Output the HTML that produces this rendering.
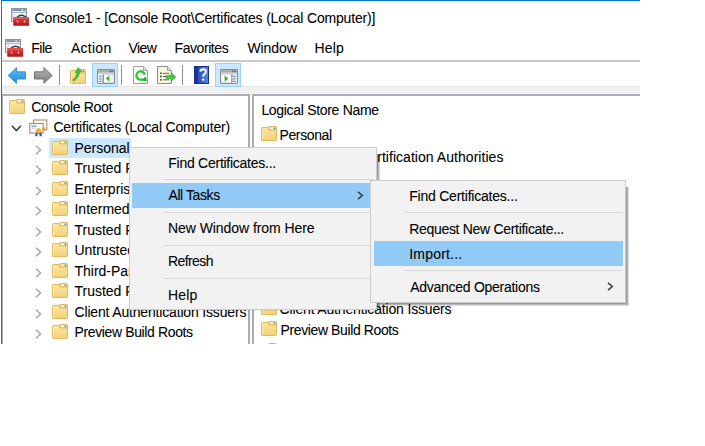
<!DOCTYPE html>
<html><head><meta charset="utf-8">
<style>
html,body{margin:0;padding:0;background:#fff;width:705px;height:446px;overflow:hidden}
body{position:relative;font-family:"Liberation Sans",sans-serif;color:#000}
.a{position:absolute}
.t{position:absolute;white-space:nowrap;font-size:14px;line-height:16px;letter-spacing:-0.24px;-webkit-text-stroke:0.08px #000}
svg.i{position:absolute;overflow:visible}
</style></head><body>
<svg width="0" height="0" style="position:absolute">
<defs>
<linearGradient id="fold" x1="0" y1="0" x2="0" y2="1"><stop offset="0" stop-color="#fce7a2"/><stop offset="1" stop-color="#f3d178"/></linearGradient>
<linearGradient id="blueA" x1="0" y1="0" x2="0" y2="1"><stop offset="0" stop-color="#62c4fa"/><stop offset="1" stop-color="#1c86dc"/></linearGradient>
<linearGradient id="greyA" x1="0" y1="0" x2="0" y2="1"><stop offset="0" stop-color="#b4b4b4"/><stop offset="1" stop-color="#7c7c7c"/></linearGradient>
<linearGradient id="helpB" x1="0" y1="0" x2="1" y2="0"><stop offset="0" stop-color="#1f3fa8"/><stop offset="0.3" stop-color="#2c52c0"/><stop offset="1" stop-color="#5a86e6"/></linearGradient>
<linearGradient id="redB" x1="0" y1="0" x2="0" y2="1"><stop offset="0" stop-color="#e84040"/><stop offset="1" stop-color="#b81414"/></linearGradient>
<symbol id="folder" viewBox="0 0 16 15">
<path d="M7.5,3.5 V1.2 Q7.5,0.5 8.2,0.5 H14.8 Q15.5,0.5 15.5,1.2 V5 Z" fill="#f3d37c" stroke="#deb862" stroke-width="1"/>
<rect x="9" y="1.5" width="4.5" height="1.8" fill="#fffbe8"/>
<circle cx="13.3" cy="2.3" r="0.9" fill="#3f8fd8"/>
<path d="M0.5,2.2 Q0.5,1.5 1.2,1.5 H6.3 Q7,1.5 7.4,2.4 L8,4 H15.5 V13.8 Q15.5,14.5 14.8,14.5 H1.2 Q0.5,14.5 0.5,13.8 Z" fill="url(#fold)" stroke="#deb862" stroke-width="1"/>
<path d="M1.5,3 V13.5" stroke="#fdebb0" stroke-width="1"/>
</symbol>
<symbol id="mmc" viewBox="0 0 18 18">
<rect x="0.5" y="0.5" width="15" height="13" fill="#f4f6f8" stroke="#8a93a6"/>
<rect x="1" y="1" width="14" height="2.2" fill="#c9cfdc"/>
<rect x="1.5" y="1.5" width="9" height="1.2" fill="#5d6b88"/>
<rect x="12" y="1.5" width="2.5" height="1.2" fill="#5d6b88"/>
<rect x="1" y="4" width="14" height="1" fill="#aab3c4"/>
<rect x="1" y="5.5" width="3" height="8" fill="#dfe4ec"/>
<path d="M6,9.3 Q10.5,5.2 15,9.3" fill="none" stroke="#3a3f44" stroke-width="1.4"/>
<rect x="2.2" y="9" width="16" height="8.7" rx="0.8" fill="url(#redB)"/>
<rect x="2.7" y="9.6" width="15" height="1.3" fill="#f06a6a" opacity="0.7"/>
<rect x="5.7" y="12.2" width="1.6" height="2.6" rx="0.8" fill="#9fc9c6"/>
<rect x="12.7" y="12.2" width="1.6" height="2.6" rx="0.8" fill="#9fc9c6"/>
</symbol>
<symbol id="chevR" viewBox="0 0 7 10"><path d="M1,0.8 L5.6,5 L1,9.2" fill="none" stroke="#a6a6a6" stroke-width="1.5"/></symbol>
</defs></svg>
<div class="a" style="left:1px;top:0px;width:639px;height:1px;background:#0078d7"></div>
<div class="a" style="left:1px;top:0px;width:1px;height:344px;background:#0078d7"></div>
<svg class="i" style="left:11px;top:8px" width="18" height="18"><use href="#mmc"/></svg>
<div class="t" style="left:34.6px;top:10px;letter-spacing:-0.173px">Console1 - [Console Root\Certificates (Local Computer)]</div>
<svg class="i" style="left:4.5px;top:38.7px" width="18" height="18"><use href="#mmc"/></svg>
<div class="t" style="left:31.3px;top:40px;letter-spacing:-0.5px">File</div>
<div class="t" style="left:70.9px;top:40px;letter-spacing:0.28px">Action</div>
<div class="t" style="left:128.5px;top:40px;letter-spacing:-0.6px">View</div>
<div class="t" style="left:174.6px;top:40px;letter-spacing:-0.44px">Favorites</div>
<div class="t" style="left:247.4px;top:40px;letter-spacing:-0.08px">Window</div>
<div class="t" style="left:314.5px;top:40px;letter-spacing:0.2px">Help</div>
<div class="a" style="left:2px;top:60px;width:638px;height:2px;background:#c8c9cb"></div>
<div class="a" style="left:2px;top:86px;width:638px;height:1px;background:#e6e6e6"></div>
<div class="a" style="left:2px;top:87px;width:638px;height:6px;background:#f0f0f0"></div>
<div class="a" style="left:2px;top:93px;width:638px;height:1px;background:#f8f8f8"></div>
<svg class="i" style="left:0;top:0" width="705" height="100"><path d="M8.2,75.5 L16.5,67.6 V71.8 H25.5 V79 H16.5 V83.3 Z" fill="url(#blueA)" stroke="#2f86d2" stroke-width="0.9" stroke-linejoin="round"/><path d="M52.2,75.5 L43.9,67.6 V71.8 H34.5 V79 H43.9 V83.3 Z" fill="url(#greyA)" stroke="#6a6a6a" stroke-width="0.9" stroke-linejoin="round"/></svg>
<div class="a" style="left:59px;top:65px;width:1.3px;height:20px;background:#8f8f8f"></div>
<div class="a" style="left:121px;top:65px;width:1.3px;height:20px;background:#8f8f8f"></div>
<div class="a" style="left:182px;top:65px;width:1.3px;height:20px;background:#8f8f8f"></div>
<svg class="i" style="left:70px;top:68.5px" width="16" height="15"><use href="#folder"/></svg>
<svg class="i" style="left:0;top:0" width="705" height="100"><path d="M72.5,80 Q76.5,77 77.2,72.5 L75,72.6 L78.2,67.6 L82,71.5 L79.6,72 Q79,78 73.5,81 Z" fill="#3fc43a" stroke="#2a9a28" stroke-width="0.6"/></svg>
<div class="a" style="left:92px;top:63px;width:26px;height:23.5px;background:#cce8ff;border:1px solid #99d1ff;box-sizing:border-box"></div>
<div class="a" style="left:215px;top:63px;width:26px;height:23.5px;background:#cce8ff;border:1px solid #99d1ff;box-sizing:border-box"></div>
<svg class="i" style="left:97px;top:69.2px" width="18" height="15" viewBox="0 0 18 15"><rect x="0.6" y="0.6" width="16.8" height="13.8" rx="0.8" fill="#fff" stroke="#868b94" stroke-width="1.2"/><rect x="1.2" y="1.2" width="15.6" height="2.6" fill="#a4a8ae"/><rect x="12" y="1.6" width="4.2" height="1.6" fill="#707680"/><rect x="1.2" y="3.8" width="15.6" height="1" fill="#e6e8ea"/><rect x="1.2" y="4.6" width="15.6" height="0.8" fill="#a9adb3"/><rect x="1.2" y="5.4" width="4.6" height="8.4" fill="#f4f6f8"/><rect x="5.6" y="5.4" width="1.4" height="8.4" fill="#8c9098"/><rect x="2.3" y="6.8" width="2.4" height="1.1" rx="0.5" fill="#4f7fc8"/><rect x="2.3" y="9.3" width="2.4" height="1.1" rx="0.5" fill="#4f7fc8"/><rect x="2.3" y="11.8" width="2.4" height="1.1" rx="0.5" fill="#4f7fc8"/><path d="M8.8,9.6 L12.4,6.2 V13 Z" fill="#3cb43c"/><rect x="14.6" y="5.6" width="0.7" height="8" fill="#d8d8d8"/></svg>
<svg class="i" style="left:220px;top:69.2px" width="18" height="15" viewBox="0 0 18 15"><rect x="0.6" y="0.6" width="16.8" height="13.8" rx="0.8" fill="#fff" stroke="#868b94" stroke-width="1.2"/><rect x="1.2" y="1.2" width="15.6" height="2.6" fill="#a4a8ae"/><rect x="12" y="1.6" width="4.2" height="1.6" fill="#707680"/><rect x="1.2" y="3.8" width="15.6" height="1" fill="#e6e8ea"/><rect x="1.2" y="4.6" width="15.6" height="0.8" fill="#a9adb3"/><rect x="12.2" y="5.4" width="4.6" height="8.4" fill="#f4f6f8"/><rect x="11.2" y="5.4" width="1.4" height="8.4" fill="#8c9098"/><rect x="13.3" y="6.8" width="2.4" height="1.1" rx="0.5" fill="#4f7fc8"/><rect x="13.3" y="9.3" width="2.4" height="1.1" rx="0.5" fill="#4f7fc8"/><rect x="13.3" y="11.8" width="2.4" height="1.1" rx="0.5" fill="#4f7fc8"/><path d="M4.6,6.2 L8.4,9.6 L4.6,13 Z" fill="#3cb43c"/></svg>
<svg class="i" style="left:133px;top:66px" width="16" height="18" viewBox="0 0 16 18"><path d="M0.5,0.5 H10.5 L14.5,4.5 V17.5 H0.5 Z" fill="#fdfdfd" stroke="#9c9c9c"/><path d="M10.5,0.5 V4.5 H14.5" fill="#dedede" stroke="#a8a8a8"/><path d="M11.74,8.77 A4.2,4.2 0 1 0 10.0,12.94" fill="none" stroke="#2fc52f" stroke-width="2.3"/><path d="M8.6,14.2 L12.9,10.6 L13.8,15.4 Z" fill="#16ad16"/></svg>
<svg class="i" style="left:157px;top:66px" width="20" height="18" viewBox="0 0 20 18"><path d="M0.5,0.5 H10.5 L14.5,4.5 V17.5 H0.5 Z" fill="#fbf5d8" stroke="#8e8e8e"/><path d="M10.5,0.5 V4.5 H14.5" fill="#e0e0e0" stroke="#9a9a9a"/><rect x="3" y="6.5" width="1.8" height="1.6" fill="#555"/><rect x="6" y="6.8" width="6" height="1" fill="#5560a8"/><rect x="3" y="9.7" width="1.8" height="1.6" fill="#555"/><rect x="6" y="10" width="6" height="1" fill="#5560a8"/><rect x="3" y="13" width="1.8" height="1.6" fill="#555"/><rect x="6" y="13.3" width="6" height="1" fill="#5560a8"/><path d="M9,9.6 H14 V6.6 L18.8,11 L14,15.4 V12.4 H9 Z" fill="#46c940" stroke="#2aa428" stroke-width="0.6"/></svg>
<svg class="i" style="left:193.5px;top:66px" width="15" height="18" viewBox="0 0 15 18"><rect x="0.5" y="0.5" width="14" height="17" fill="url(#helpB)" stroke="#15308a"/><rect x="1" y="1" width="3" height="16" fill="#1a3796"/><path d="M6.3,5.6 Q6.5,3.2 9.2,3.2 Q12,3.3 11.9,5.8 Q11.8,7.6 9.9,8.6 Q9.1,9.2 9.1,10.8" fill="none" stroke="#fff" stroke-width="1.9"/><circle cx="9.1" cy="13.6" r="1.2" fill="#fff"/></svg>
<div class="a" style="left:2px;top:94px;width:638px;height:2px;background:#a9adb3"></div>
<div class="a" style="left:2px;top:94px;width:1px;height:250px;background:#a9adb3"></div>
<div class="a" style="left:248px;top:94px;width:2px;height:250px;background:#a9adb3"></div>
<div class="a" style="left:250px;top:94px;width:2px;height:250px;background:#fafafa"></div>
<div class="a" style="left:252px;top:94px;width:2px;height:250px;background:#a9adb3"></div>
<svg class="i" style="left:9px;top:99px" width="16" height="15"><use href="#folder"/></svg>
<div class="t" style="left:31.3px;top:99px;letter-spacing:-0.349px">Console Root</div>
<svg class="i" style="left:11px;top:125px" width="11" height="7" viewBox="0 0 11 7"><path d="M0.8,0.8 L5.4,5.6 L10,0.8" fill="none" stroke="#404040" stroke-width="1.6"/></svg>
<svg class="i" style="left:29px;top:119px" width="19" height="18" viewBox="0 0 19 18"><rect x="4.5" y="1" width="13.3" height="10" fill="#fdfcf8" stroke="#a48e6c" stroke-width="1.1"/><rect x="0.8" y="4.5" width="13.3" height="9.6" fill="#fdfcf8" stroke="#a48e6c" stroke-width="1.1"/><rect x="2.6" y="6.6" width="5" height="1.2" fill="#7c8ad6"/><rect x="2.6" y="8.8" width="3.5" height="0.9" fill="#aab6e4"/><circle cx="14.6" cy="9.6" r="1.6" fill="#eaa520"/><path d="M6.9,13.2 L5.9,17.6 L7.4,16.9 L8.2,17.6 L9.2,13.6 Z" fill="#1d5fe6"/><path d="M9.8,13.6 L10.8,17.6 L11.6,16.9 L13.1,17.6 L12.2,13.2 Z" fill="#1d5fe6"/><circle cx="9.5" cy="12" r="2.4" fill="#f3b72a" stroke="#d38c12" stroke-width="0.6"/></svg>
<div class="t" style="left:53.4px;top:119px;letter-spacing:-0.19px">Certificates (Local Computer)</div>
<div class="a" style="left:49px;top:137.5px;width:82px;height:20.5px;background:#cce8ff"></div>
<div class="a" style="left:3px;top:96px;width:245px;height:248px;overflow:hidden">
<svg class="i" style="left:32px;top:48.5px" width="7" height="10"><use href="#chevR"/></svg>
<svg class="i" style="left:49px;top:44px" width="16" height="15"><use href="#folder"/></svg>
<div class="t" style="left:71.5px;top:44px;letter-spacing:-0.02px">Personal</div>
<svg class="i" style="left:32px;top:68.5px" width="7" height="10"><use href="#chevR"/></svg>
<svg class="i" style="left:49px;top:64px" width="16" height="15"><use href="#folder"/></svg>
<div class="t" style="left:71.5px;top:64px;letter-spacing:-0.02px">Trusted Root Certification Authorities</div>
<svg class="i" style="left:32px;top:89.5px" width="7" height="10"><use href="#chevR"/></svg>
<svg class="i" style="left:49px;top:85px" width="16" height="15"><use href="#folder"/></svg>
<div class="t" style="left:71.5px;top:85px;letter-spacing:-0.02px">Enterprise Trust</div>
<svg class="i" style="left:32px;top:109.5px" width="7" height="10"><use href="#chevR"/></svg>
<svg class="i" style="left:49px;top:105px" width="16" height="15"><use href="#folder"/></svg>
<div class="t" style="left:71.5px;top:105px;letter-spacing:-0.02px">Intermediate Certification Authorities</div>
<svg class="i" style="left:32px;top:130.5px" width="7" height="10"><use href="#chevR"/></svg>
<svg class="i" style="left:49px;top:126px" width="16" height="15"><use href="#folder"/></svg>
<div class="t" style="left:71.5px;top:126px;letter-spacing:-0.02px">Trusted Publishers</div>
<svg class="i" style="left:32px;top:150.5px" width="7" height="10"><use href="#chevR"/></svg>
<svg class="i" style="left:49px;top:146px" width="16" height="15"><use href="#folder"/></svg>
<div class="t" style="left:71.5px;top:146px;letter-spacing:-0.02px">Untrusted Certificates</div>
<svg class="i" style="left:32px;top:171.5px" width="7" height="10"><use href="#chevR"/></svg>
<svg class="i" style="left:49px;top:167px" width="16" height="15"><use href="#folder"/></svg>
<div class="t" style="left:71.5px;top:167px;letter-spacing:-0.02px">Third-Party Root Certification Authorities</div>
<svg class="i" style="left:32px;top:191.5px" width="7" height="10"><use href="#chevR"/></svg>
<svg class="i" style="left:49px;top:187px" width="16" height="15"><use href="#folder"/></svg>
<div class="t" style="left:71.5px;top:187px;letter-spacing:-0.02px">Trusted People</div>
<svg class="i" style="left:32px;top:212.5px" width="7" height="10"><use href="#chevR"/></svg>
<svg class="i" style="left:49px;top:208px" width="16" height="15"><use href="#folder"/></svg>
<div class="t" style="left:71.5px;top:208px;letter-spacing:-0.169px">Client Authentication Issuers</div>
<svg class="i" style="left:32px;top:232.5px" width="7" height="10"><use href="#chevR"/></svg>
<svg class="i" style="left:49px;top:228px" width="16" height="15"><use href="#folder"/></svg>
<div class="t" style="left:71.5px;top:228px;letter-spacing:-0.373px">Preview Build Roots</div>
</div>
<div class="a" style="left:254px;top:96px;width:386px;height:248px;overflow:hidden">
<div class="t" style="left:7.399999999999977px;top:6px;letter-spacing:-0.311px">Logical Store Name</div>
<svg class="i" style="left:7px;top:30px" width="16" height="15"><use href="#folder"/></svg>
<div class="t" style="left:25.5px;top:31px;letter-spacing:-0.383px">Personal</div>
<svg class="i" style="left:7px;top:52px" width="16" height="15"><use href="#folder"/></svg>
<div class="t" style="left:123.19999999999999px;top:53px;letter-spacing:0.042px">rtification Authorities</div>
<svg class="i" style="left:7px;top:73px" width="16" height="15"><use href="#folder"/></svg>
<div class="t" style="left:26.5px;top:74px;letter-spacing:-0.25px">Enterprise Trust</div>
<svg class="i" style="left:7px;top:95px" width="16" height="15"><use href="#folder"/></svg>
<div class="t" style="left:25.600000000000023px;top:96px;letter-spacing:-0.25px">Intermediate Certification Authorities</div>
<svg class="i" style="left:7px;top:117px" width="16" height="15"><use href="#folder"/></svg>
<div class="t" style="left:26.5px;top:118px;letter-spacing:-0.25px">Trusted Publishers</div>
<svg class="i" style="left:7px;top:138px" width="16" height="15"><use href="#folder"/></svg>
<div class="t" style="left:25.600000000000023px;top:139px;letter-spacing:-0.25px">Untrusted Certificates</div>
<svg class="i" style="left:7px;top:160px" width="16" height="15"><use href="#folder"/></svg>
<div class="t" style="left:26.5px;top:161px;letter-spacing:-0.25px">Third-Party Root Certification Authorities</div>
<svg class="i" style="left:7px;top:182px" width="16" height="15"><use href="#folder"/></svg>
<div class="t" style="left:26.5px;top:183px;letter-spacing:-0.25px">Trusted People</div>
<svg class="i" style="left:7px;top:204px" width="16" height="15"><use href="#folder"/></svg>
<div class="t" style="left:25.600000000000023px;top:205px;letter-spacing:-0.169px">Client Authentication Issuers</div>
<svg class="i" style="left:7px;top:225px" width="16" height="15"><use href="#folder"/></svg>
<div class="t" style="left:26.5px;top:226px;letter-spacing:-0.384px">Preview Build Roots</div>
<svg class="i" style="left:7px;top:247px" width="16" height="15"><use href="#folder"/></svg>
<div class="t" style="left:26.5px;top:248px;letter-spacing:-0.25px">Test Roots</div>
</div>
<div class="a" style="left:129px;top:147px;width:248px;height:163px;background:#f2f2f2;border:1px solid #cccccc;box-sizing:border-box"></div>
<div class="a" style="left:377px;top:154px;width:3px;height:156px;background:linear-gradient(to right,rgba(0,0,0,.45),rgba(0,0,0,.28) 50%,rgba(0,0,0,.08))"></div>
<div class="a" style="left:136px;top:310px;width:241px;height:1px;background:rgba(0,0,0,.06)"></div>
<div class="a" style="left:164px;top:179px;width:210px;height:1px;background:#d7d7d7"></div>
<div class="a" style="left:164px;top:212px;width:210px;height:1px;background:#d7d7d7"></div>
<div class="a" style="left:164px;top:245px;width:210px;height:1px;background:#d7d7d7"></div>
<div class="a" style="left:164px;top:278px;width:210px;height:1px;background:#d7d7d7"></div>
<div class="a" style="left:132px;top:183px;width:238px;height:25px;background:#91c9f7"></div>
<div class="t" style="left:168.3px;top:155px;letter-spacing:-0.261px">Find Certificates...</div>
<div class="t" style="left:168.5px;top:187px;letter-spacing:-0.415px">All Tasks</div>
<div class="t" style="left:168px;top:220px;letter-spacing:-0.061px">New Window from Here</div>
<div class="t" style="left:168px;top:253px;letter-spacing:-0.6px">Refresh</div>
<div class="t" style="left:168px;top:287px;letter-spacing:0.16px">Help</div>
<svg class="i" style="left:357.3px;top:191px" width="7" height="9" viewBox="0 0 7 9"><path d="M1,0.8 L5.3,4.5 L1,8.2" fill="none" stroke="#404040" stroke-width="1.6"/></svg>
<div class="a" style="left:370px;top:180px;width:256px;height:123px;background:#f2f2f2;border:1px solid #cccccc;box-sizing:border-box"></div>
<div class="a" style="left:626px;top:187px;width:3px;height:116px;background:linear-gradient(to right,rgba(0,0,0,.45),rgba(0,0,0,.28) 50%,rgba(0,0,0,.08))"></div>
<div class="a" style="left:626px;top:303px;width:3px;height:3px;background:radial-gradient(circle at 0 0,rgba(0,0,0,.4),rgba(0,0,0,.25) 45%,rgba(0,0,0,.03) 100%)"></div>
<div class="a" style="left:377px;top:303px;width:249px;height:3px;background:linear-gradient(to bottom,rgba(0,0,0,.45),rgba(0,0,0,.28) 50%,rgba(0,0,0,.08))"></div>
<div class="a" style="left:405px;top:212px;width:218px;height:1px;background:#d7d7d7"></div>
<div class="a" style="left:405px;top:270px;width:218px;height:1px;background:#d7d7d7"></div>
<div class="a" style="left:373.5px;top:241px;width:249.5px;height:25px;background:#91c9f7"></div>
<div class="t" style="left:409.2px;top:188px;letter-spacing:-0.219px">Find Certificates...</div>
<div class="t" style="left:409.2px;top:221px;letter-spacing:-0.304px">Request New Certificate...</div>
<div class="t" style="left:409.2px;top:246px;letter-spacing:0.21px">Import...</div>
<div class="t" style="left:410.2px;top:279px;letter-spacing:-0.273px">Advanced Operations</div>
<svg class="i" style="left:607px;top:282px" width="7" height="9" viewBox="0 0 7 9"><path d="M1,0.8 L5.3,4.5 L1,8.2" fill="none" stroke="#404040" stroke-width="1.6"/></svg>
</body></html>
